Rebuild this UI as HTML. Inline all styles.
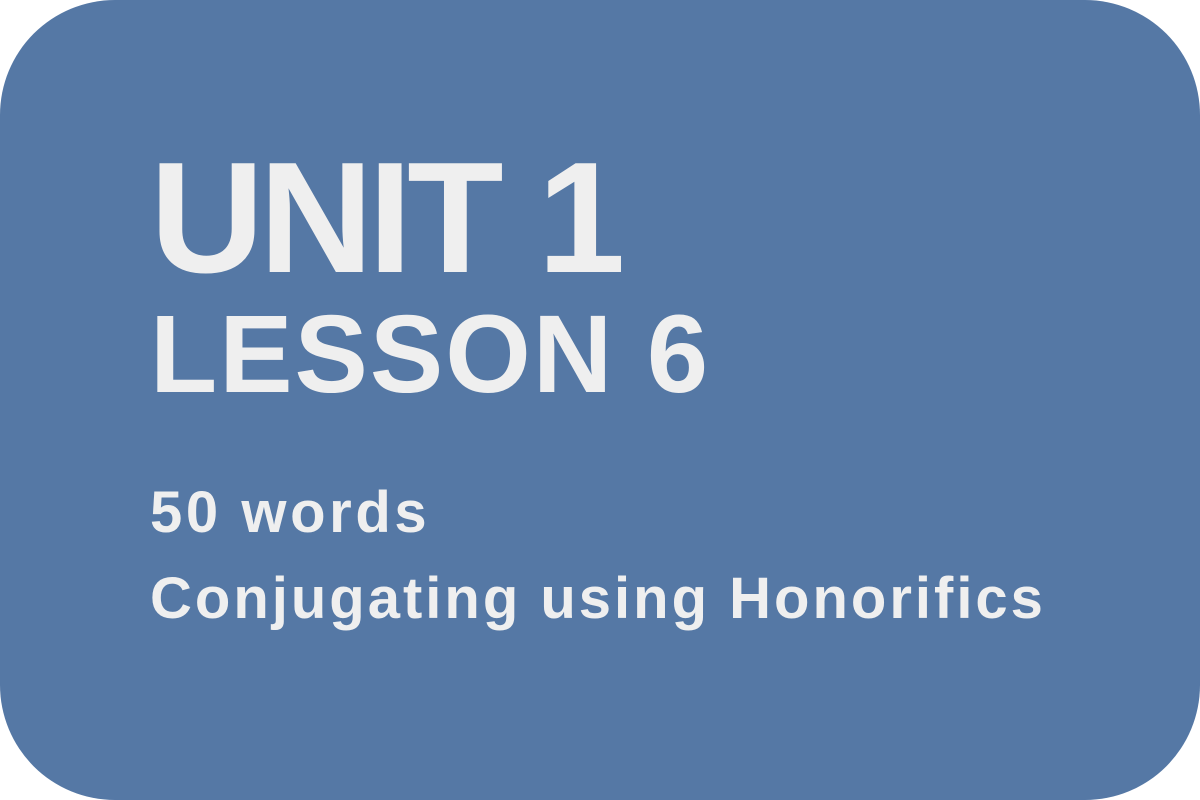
<!DOCTYPE html>
<html><head><style>
html,body{margin:0;padding:0;background:#fff;}
.card{position:absolute;left:0;top:0;width:1200px;height:800px;background:#5578a5;border-radius:115px;overflow:hidden;}
.t{position:absolute;left:150px;color:#efefef;font-family:"Liberation Sans",sans-serif;font-weight:bold;white-space:nowrap;line-height:1;}
</style></head><body>
<div class="card">
<div class="t" style="top:139px;font-size:158px;letter-spacing:-5px;">UNIT 1</div>
<div class="t" style="top:300px;font-size:110px;letter-spacing:2px;">LESSON 6</div>
<div class="t" style="top:484px;font-size:58px;letter-spacing:3.6px;">50 words</div>
<div class="t" style="top:570px;font-size:58px;letter-spacing:3px;">Conjugating using Honorifics</div>
</div>
</body></html>
